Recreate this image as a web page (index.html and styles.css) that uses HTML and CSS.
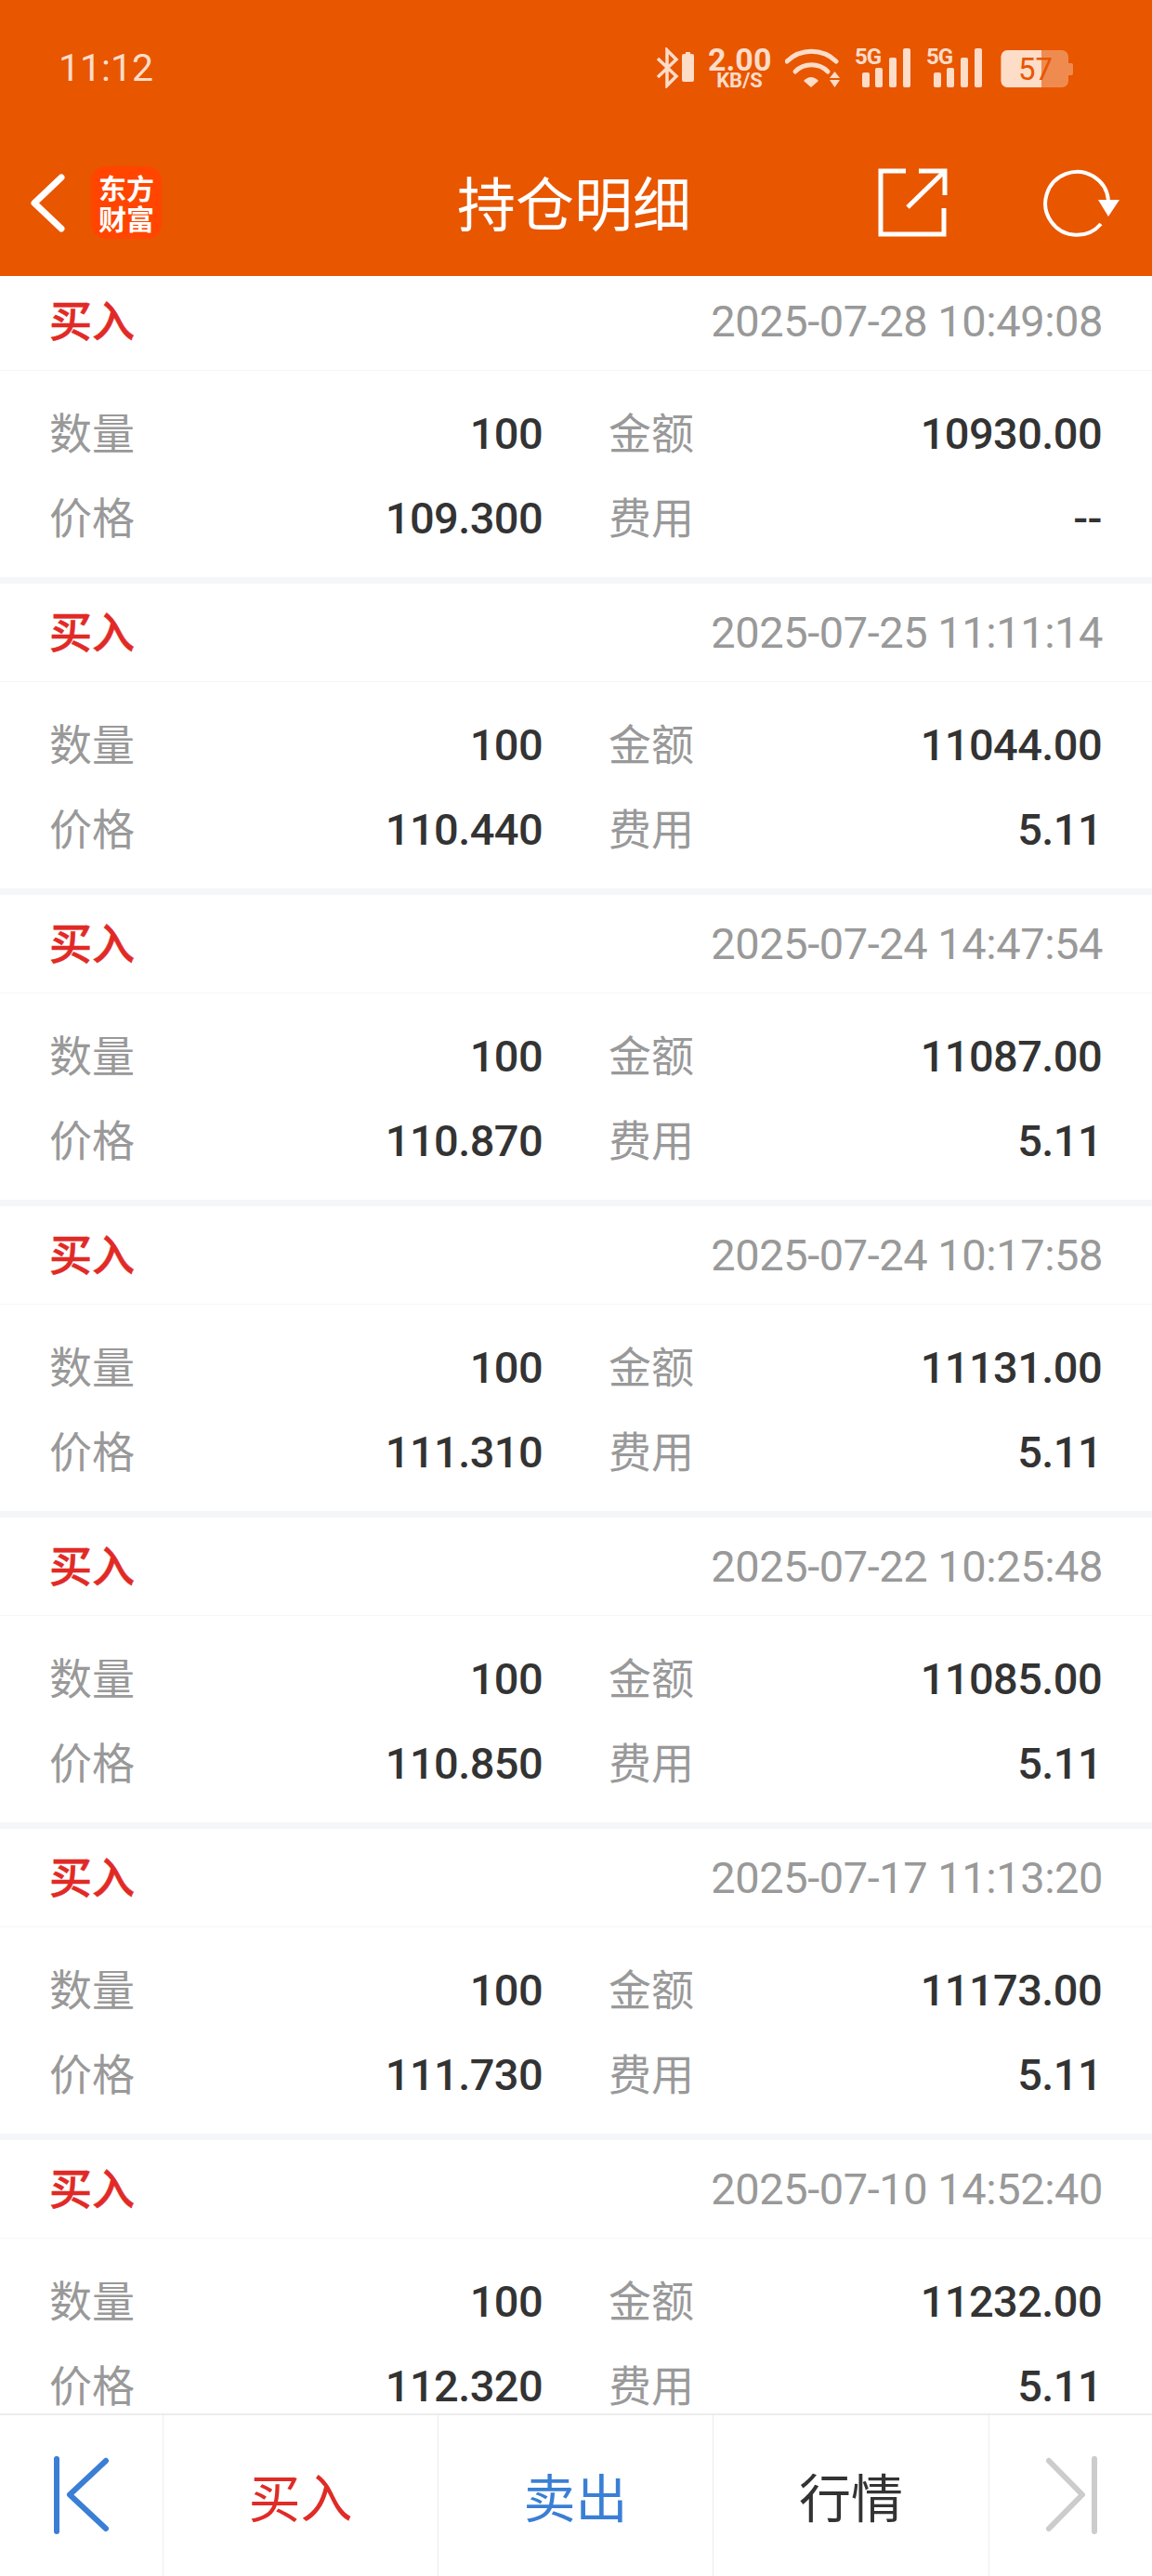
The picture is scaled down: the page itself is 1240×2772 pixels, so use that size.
FILE: index.html
```html
<!DOCTYPE html>
<html lang="zh">
<head>
<meta charset="UTF-8"/>
<meta name="viewport" content="width=device-width, initial-scale=1.0"/>
<title>持仓明细</title>
<link rel="stylesheet" href="styles.css">
</head>
<body>
  <header class="top">
    <div class="status">
      <span class="time">11:12</span>
      <div class="status-icons">
        <svg class="ic-bt" viewBox="0 0 41 44">
          <path class="st-line" d="M2 12 22 31 12 41V3L22 13 2 32"/>
          <rect class="st-fill" x="28" y="7" width="13" height="30" rx="2"/>
          <rect class="st-fill" x="32" y="5" width="5" height="3"/>
        </svg>
        <div class="speed"><b>2.00</b><small>KB/S</small></div>
        <svg class="ic-wifi" viewBox="0 0 60 44">
          <path class="st-wifi" d="M2 15A38 38 0 0 1 55 15"/>
          <path class="st-wifi" d="M11 26A25 25 0 0 1 46 26"/>
          <path class="st-fill" d="M20 36Q28 28 36 36L28 43Z"/>
          <path class="st-fill" d="M48 33 53.500 26 59 33Z"/>
          <path class="st-fill" d="M48 35H59L53.500 43Z"/>
        </svg>
        <svg class="ic-signal" viewBox="0 -4 62 52">
          <text class="st-5g" x="0" y="18">5G</text>
          <rect class="st-fill" x="8" y="27" width="8" height="16" rx="2"/>
          <rect class="st-fill" x="22" y="22" width="8" height="21" rx="2"/>
          <rect class="st-fill" x="37" y="11" width="8" height="32" rx="2"/>
          <rect class="st-fill" x="52" y="1" width="8" height="42" rx="2"/>
        </svg>
        <svg class="ic-signal" viewBox="0 -4 62 52">
          <text class="st-5g" x="0" y="18">5G</text>
          <rect class="st-fill" x="8" y="27" width="8" height="16" rx="2"/>
          <rect class="st-fill" x="22" y="22" width="8" height="21" rx="2"/>
          <rect class="st-fill" x="37" y="11" width="8" height="32" rx="2"/>
          <rect class="st-fill" x="52" y="1" width="8" height="42" rx="2"/>
        </svg>
        <svg class="ic-batt" viewBox="0 0 84 44">
          <rect class="st-dim" x="3.500" y="3" width="72.500" height="40" rx="7"/>
          <path class="st-dim" d="M76 17h3a2 2 0 0 1 2 2v9a2 2 0 0 1-2 2h-3Z"/>
          <path class="st-fill" d="M47 3H10.500a7 7 0 0 0-7 7v26a7 7 0 0 0 7 7H47Z"/>
          <text class="st-num" x="40.500" y="35">57</text>
        </svg>
      </div>
    </div>
    <div class="toolbar">
      <div class="tb-left">
        <svg class="ic-back" viewBox="0 0 44 70"><path d="M38 8 9 35.500 38 63"/></svg>
        <div class="logo">东方<br>财富</div>
      </div>
      <h1 class="title">持仓明细</h1>
      <div class="tb-right">
        <svg class="ic-open" viewBox="0 0 76 76">
          <path d="M31 4H4V72H72V44"/>
          <path d="M33 43 72 5"/>
          <path d="M45 4H73V30"/>
        </svg>
        <svg class="ic-refresh" viewBox="0 0 88 80">
          <path d="M73 37A34 34 0 1 0 65 63"/>
          <path class="solid" d="M62 37H85L73 55Z"/>
        </svg>
      </div>
    </div>
  </header>

  <main class="list">
    <section class="card">
      <div class="card-head"><span class="side">买入</span><span class="stamp">2025-07-28 10:49:08</span></div>
      <div class="card-body">
        <div class="cell"><span class="key">数量</span><span class="val">100</span></div>
        <div class="cell"><span class="key">金额</span><span class="val">10930.00</span></div>
        <div class="cell"><span class="key">价格</span><span class="val">109.300</span></div>
        <div class="cell"><span class="key">费用</span><span class="val">--</span></div>
      </div>
    </section>
    <section class="card">
      <div class="card-head"><span class="side">买入</span><span class="stamp">2025-07-25 11:11:14</span></div>
      <div class="card-body">
        <div class="cell"><span class="key">数量</span><span class="val">100</span></div>
        <div class="cell"><span class="key">金额</span><span class="val">11044.00</span></div>
        <div class="cell"><span class="key">价格</span><span class="val">110.440</span></div>
        <div class="cell"><span class="key">费用</span><span class="val">5.11</span></div>
      </div>
    </section>
    <section class="card">
      <div class="card-head"><span class="side">买入</span><span class="stamp">2025-07-24 14:47:54</span></div>
      <div class="card-body">
        <div class="cell"><span class="key">数量</span><span class="val">100</span></div>
        <div class="cell"><span class="key">金额</span><span class="val">11087.00</span></div>
        <div class="cell"><span class="key">价格</span><span class="val">110.870</span></div>
        <div class="cell"><span class="key">费用</span><span class="val">5.11</span></div>
      </div>
    </section>
    <section class="card">
      <div class="card-head"><span class="side">买入</span><span class="stamp">2025-07-24 10:17:58</span></div>
      <div class="card-body">
        <div class="cell"><span class="key">数量</span><span class="val">100</span></div>
        <div class="cell"><span class="key">金额</span><span class="val">11131.00</span></div>
        <div class="cell"><span class="key">价格</span><span class="val">111.310</span></div>
        <div class="cell"><span class="key">费用</span><span class="val">5.11</span></div>
      </div>
    </section>
    <section class="card">
      <div class="card-head"><span class="side">买入</span><span class="stamp">2025-07-22 10:25:48</span></div>
      <div class="card-body">
        <div class="cell"><span class="key">数量</span><span class="val">100</span></div>
        <div class="cell"><span class="key">金额</span><span class="val">11085.00</span></div>
        <div class="cell"><span class="key">价格</span><span class="val">110.850</span></div>
        <div class="cell"><span class="key">费用</span><span class="val">5.11</span></div>
      </div>
    </section>
    <section class="card">
      <div class="card-head"><span class="side">买入</span><span class="stamp">2025-07-17 11:13:20</span></div>
      <div class="card-body">
        <div class="cell"><span class="key">数量</span><span class="val">100</span></div>
        <div class="cell"><span class="key">金额</span><span class="val">11173.00</span></div>
        <div class="cell"><span class="key">价格</span><span class="val">111.730</span></div>
        <div class="cell"><span class="key">费用</span><span class="val">5.11</span></div>
      </div>
    </section>
    <section class="card">
      <div class="card-head"><span class="side">买入</span><span class="stamp">2025-07-10 14:52:40</span></div>
      <div class="card-body">
        <div class="cell"><span class="key">数量</span><span class="val">100</span></div>
        <div class="cell"><span class="key">金额</span><span class="val">11232.00</span></div>
        <div class="cell"><span class="key">价格</span><span class="val">112.320</span></div>
        <div class="cell"><span class="key">费用</span><span class="val">5.11</span></div>
      </div>
    </section>
  </main>

  <nav class="tabs">
    <div class="tab">
      <svg class="ic-first" viewBox="0 0 60 84"><path d="M3 3V81"/><path d="M56 5 17 41.500 56 78"/></svg>
    </div>
    <div class="tab tab-buy">买入</div>
    <div class="tab tab-sell">卖出</div>
    <div class="tab tab-quote">行情</div>
    <div class="tab">
      <svg class="ic-last" viewBox="0 0 60 84"><path d="M6 5 42 41.500 6 78"/><path d="M55 3V81"/></svg>
    </div>
  </nav>
</body>
</html>
```
FILE: styles.css
```css
* { box-sizing: border-box; }
html, body { margin: 0; padding: 0; }
body { display: flex; flex-direction: column; height: 2772px; overflow: hidden; background: #fff; color: #333; font-family: Roboto, "Noto Sans CJK SC", sans-serif; }

/* top bar */
.top { position: relative; z-index: 2; height: 297px; background: #e85600; flex: none; }
.status { display: flex; align-items: center; height: 146px; padding: 0 82px 0 63px; }
.time { font-size: 41px; color: #fddcc8; }
.status-icons { display: flex; align-items: center; gap: 15px; margin-left: auto; height: 44px; }
.status-icons svg { display: block; height: 44px; flex: none; }
.status-icons .ic-signal { width: 62px; height: 52px; }
.ic-bt { width: 41px; }
.ic-wifi { width: 60px; }
.ic-batt { width: 84px; }
.st-fill { fill: #fddcc8; }
.st-dim { fill: #fddcc8; opacity: .4; }
.st-line { fill: none; stroke: #fddcc8; stroke-width: 3.5; }
.st-wifi { fill: none; stroke: #fddcc8; stroke-width: 5; stroke-linecap: round; }
.st-5g { fill: #fddcc8; font-size: 24px; font-weight: 700; letter-spacing: -1px; }
.st-num { fill: #e85600; font-size: 33px; text-anchor: middle; }
.speed { width: 68px; color: #fddcc8; text-align: center; }
.speed b { display: block; font-size: 34px; line-height: 26px; }
.speed small { display: block; margin-top: 1px; font-size: 22px; font-weight: 700; line-height: 18px; }

.toolbar { display: grid; grid-template-columns: 1fr auto 1fr; align-items: center; height: 151px; padding: 0 32px 7px 28px; color: #fff; }
.tb-left { display: flex; align-items: center; }
.tb-right { display: flex; align-items: center; justify-content: flex-end; gap: 100px; }
.ic-back { width: 44px; height: 70px; fill: none; stroke: #fff; stroke-width: 7; stroke-linecap: round; stroke-linejoin: round; }
.logo { width: 76px; height: 78px; margin-left: 26px; padding-top: 6px; border-radius: 16px; background: #ff4500; color: #fff; font-family: "Noto Sans CJK SC", sans-serif; font-size: 30px; font-weight: 700; line-height: 33px; text-align: center; }
.title { margin: 0 0 5px; font-family: "Noto Sans CJK SC", sans-serif; font-size: 63px; font-weight: 400; line-height: 80px; }
.ic-open { width: 76px; height: 76px; fill: none; stroke: #fff; stroke-width: 5; }
.ic-refresh { width: 88px; height: 80px; fill: none; stroke: #fff; stroke-width: 4; }
.ic-refresh .solid { fill: #fff; stroke: none; }

/* trade list */
.list { flex: 1; min-height: 0; margin-top: -4px; overflow: hidden; }
.card { height: 335px; background: #fff; border-bottom: 7px solid #f5f6f8; }
.card-head { display: flex; align-items: center; justify-content: space-between; height: 106px; padding: 0 53px; border-bottom: 1px solid #f6f6f6; }
.side { color: #e12a26; font-size: 46px; font-weight: 500; line-height: 60px; -webkit-text-stroke: .6px #e12a26; }
.stamp { color: #999; font-size: 47px; letter-spacing: -.45px; line-height: 60px; }
.card-body { display: grid; grid-template-columns: 531px 531px; column-gap: 71px; padding: 22px 53px 0; }
.cell { display: flex; align-items: center; justify-content: space-between; height: 91px; }
.key { margin-bottom: 8px; color: #999; font-size: 46px; }
.val { color: #333; font-size: 47px; font-weight: 500; letter-spacing: -.6px; }

/* bottom tabs */
.tabs { display: grid; grid-template-columns: 175px 296px 296px 297px 176px; flex: none; height: 175px; border-top: 2px solid #ececec; background: #fff; }
.tab { display: flex; align-items: center; justify-content: center; padding-bottom: 2px; border-left: 1px solid #ececec; font-size: 56px; }
.tab:first-child { border-left: 0; }
.tab-buy { color: #e02b27; }
.tab-sell { color: #3a7fd5; }
.tab-quote { color: #333; }
.ic-first, .ic-last { width: 60px; height: 84px; fill: none; stroke-width: 6; stroke-linecap: round; stroke-linejoin: round; }
.ic-first { stroke: #3a7fd5; }
.ic-last { stroke: #ccc; }
```
